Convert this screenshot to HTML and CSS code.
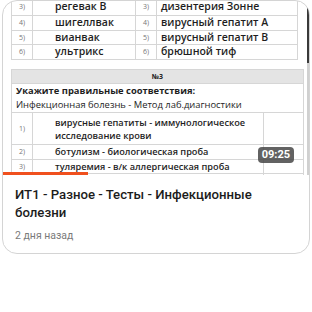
FILE: index.html
```
<!DOCTYPE html>
<html lang="ru">
<head>
  <meta charset="UTF-8" />
  <title>ИТ1 - Разное - Тесты - Инфекционные болезни</title>
  <link rel="stylesheet" href="styles.css">
</head>
<body>

  <div class="card">
    <div class="thumb">
      <div class="doc">
        <table class="answers">
          <tr class="first">
            <td class="num">3)</td><td class="txt">регевак В</td>
            <td class="num">3)</td><td class="txt">дизентерия Зонне</td>
          </tr>
          <tr>
            <td class="num">4)</td><td class="txt">шигеллвак</td>
            <td class="num">4)</td><td class="txt">вирусный гепатит А</td>
          </tr>
          <tr>
            <td class="num">5)</td><td class="txt">вианвак</td>
            <td class="num">5)</td><td class="txt">вирусный гепатит В</td>
          </tr>
          <tr>
            <td class="num">6)</td><td class="txt">ультрикс</td>
            <td class="num">6)</td><td class="txt">брюшной тиф</td>
          </tr>
        </table>

        <table class="question">
          <colgroup>
            <col class="c-num"><col class="c-txt"><col class="c-mark">
          </colgroup>
          <tr class="head"><td colspan="3">№3</td></tr>
          <tr>
            <td colspan="3" class="task">
              <b>Укажите правильные соответствия:</b><br>
              Инфекционная болезнь - Метод лаб.диагностики
            </td>
          </tr>
          <tr class="tall">
            <td class="num">1)</td>
            <td class="txt">вирусные гепатиты - иммунологическое<br>исследование крови</td>
            <td></td>
          </tr>
          <tr>
            <td class="num">2)</td>
            <td class="txt">ботулизм - биологическая проба</td>
            <td></td>
          </tr>
          <tr>
            <td class="num">3)</td>
            <td class="txt">туляремия - в/к аллергическая проба</td>
            <td></td>
          </tr>
          <tr>
            <td class="num">4)</td>
            <td class="txt">дизентерия - бактериологический</td>
            <td></td>
          </tr>
        </table>
      </div>

      <span class="duration">09:25</span>
      <div class="progress"><div class="progress-fill" style="width: 28%"></div></div>
    </div>

    <div class="info">
      <h3 class="title">ИТ1 - Разное - Тесты - Инфекционные болезни</h3>
      <div class="meta">2 дня назад</div>
    </div>
  </div>

</body>
</html>
```

FILE: styles.css
```
body {
  margin: 0;
  background: #fff;
  font-family: 'Roboto', 'Noto Sans', sans-serif;
}

.card {
  width: 306px;
  margin: 0 2px;
  border: 1px solid #d4d4d4;
  border-radius: 15px;
  overflow: hidden;
  background: #fff;
}

/* Миниатюра видео */
.thumb {
  position: relative;
  height: 174px;
  overflow: hidden;
  border-right: 2px solid;
  border-image: linear-gradient(#3a3a3a 36%, #d0d0d0 36%) 1;
}

.doc {
  margin-top: -4px;
  padding-left: 8px;
  font-family: 'Open Sans', sans-serif;
  color: #1e1e1e;
}

table {
  border-collapse: collapse;
}
td {
  border: 1px solid #d6d6d6;
  padding: 0;
  height: 13.5px;
  font-size: 10.5px;
  line-height: 13px;
  vertical-align: middle;
  white-space: nowrap;
}
td.num {
  width: 20px;
  font-size: 7px;
  color: #777;
  text-align: center;
}
td.txt {
  font-weight: 600;
}

.answers {
  width: 287px;
}
.answers .first td {
  height: 17px;
}
.answers td.txt {
  padding-left: 22px;
}
.answers td.txt:last-child {
  padding-left: 4px;
}

.question {
  width: 293px;
  margin-top: 9px;
  table-layout: fixed;
}
.question .c-num {
  width: 21px;
}
.question .c-mark {
  width: 40px;
}
.question .head td {
  background: #e4e4e4;
  font-size: 7px;
  font-weight: 700;
  text-align: center;
}
.question td.task {
  padding: 0 4px;
  height: 28px;
  font-size: 9.4px;
  line-height: 14px;
}
.question td.txt {
  padding-left: 22px;
  font-size: 9.2px;
  overflow: hidden;
}
.question .tall td {
  height: 31px;
}

.duration {
  position: absolute;
  right: 13px;
  bottom: 12px;
  padding: 1px 4px;
  border-radius: 4px;
  background: rgba(70, 70, 70, 0.85);
  color: #fff;
  font-size: 11px;
  font-weight: 700;
  line-height: 14px;
}

.progress {
  position: absolute;
  left: 0;
  right: 0;
  bottom: 0;
  height: 3px;
}
.progress-fill {
  height: 100%;
  background: #f0501e;
}

/* Подпись */
.info {
  padding: 11px 12px 10px;
}
.title {
  margin: 0;
  font-size: 13.2px;
  font-weight: 500;
  line-height: 18px;
  color: #1c1c1c;
}
.meta {
  margin-top: 7px;
  font-size: 10.5px;
  line-height: 14px;
  color: #7a7a7a;
}
```
